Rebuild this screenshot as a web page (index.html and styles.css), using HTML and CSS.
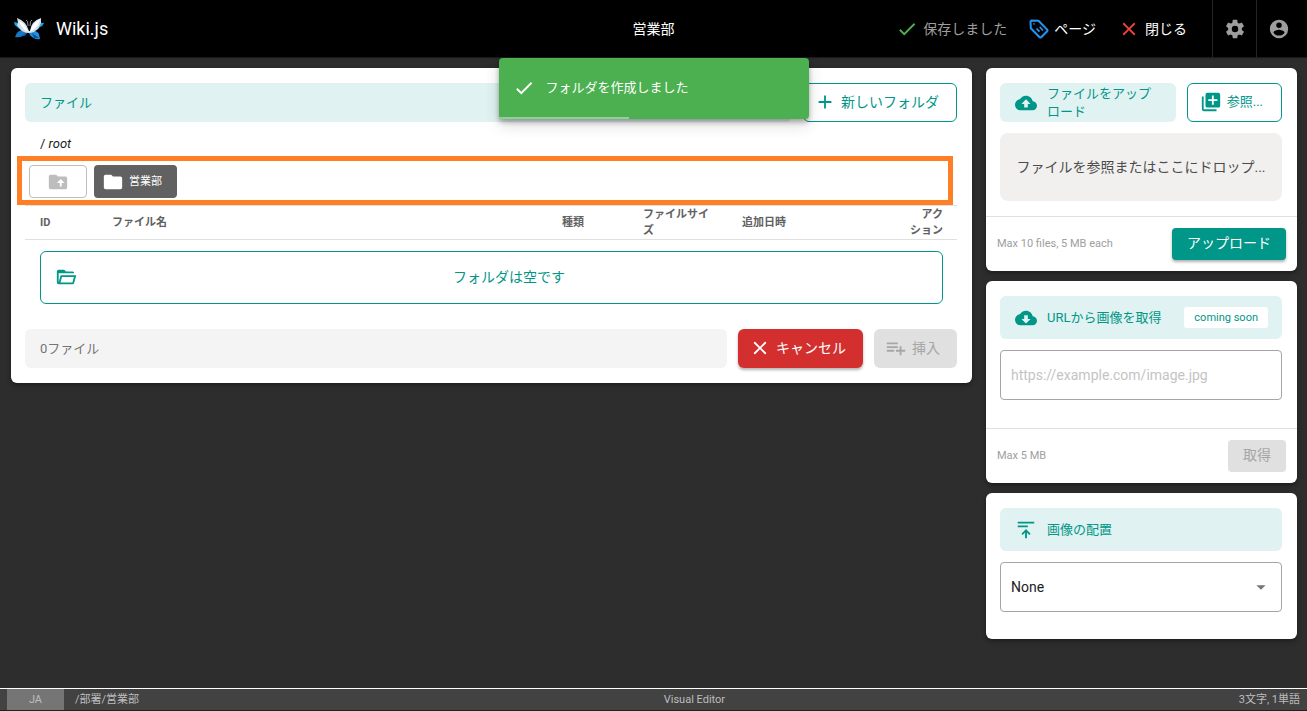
FILE: index.html
```
<!DOCTYPE html>
<html lang="ja">
<head>
<meta charset="utf-8">
<title>営業部 | Wiki.js</title>
<link rel="stylesheet" href="styles.css">
</head>
<body>
<svg class="sprite" aria-hidden="true">
  <symbol id="check" viewBox="0 0 24 24"><path d="M21,7L9,19L3.5,13.5L4.91,12.09L9,16.17L19.59,5.59L21,7Z"/></symbol>
  <symbol id="plus" viewBox="0 0 24 24"><path d="M19,13H13V19H11V13H5V11H11V5H13V11H19V13Z"/></symbol>
  <symbol id="close" viewBox="0 0 24 24"><path d="M19,6.41L17.59,5L12,10.59L6.41,5L5,6.41L10.59,12L5,17.59L6.41,19L12,13.41L17.59,19L19,17.59L13.41,12L19,6.41Z"/></symbol>
  <symbol id="cog" viewBox="0 0 24 24"><path d="M12,15.5A3.5,3.5 0 0,1 8.5,12A3.5,3.5 0 0,1 12,8.5A3.5,3.5 0 0,1 15.5,12A3.5,3.5 0 0,1 12,15.5M19.43,12.97C19.47,12.65 19.5,12.33 19.5,12C19.5,11.67 19.47,11.34 19.43,11L21.54,9.37C21.73,9.22 21.78,8.95 21.66,8.73L19.66,5.27C19.54,5.05 19.27,4.96 19.05,5.05L16.56,6.05C16.04,5.66 15.5,5.32 14.87,5.07L14.5,2.42C14.46,2.18 14.25,2 14,2H10C9.75,2 9.54,2.18 9.5,2.42L9.13,5.07C8.5,5.32 7.96,5.66 7.44,6.05L4.95,5.05C4.73,4.96 4.46,5.05 4.34,5.27L2.34,8.73C2.21,8.95 2.27,9.22 2.46,9.37L4.57,11C4.53,11.34 4.5,11.67 4.5,12C4.5,12.33 4.53,12.65 4.57,12.97L2.46,14.63C2.27,14.78 2.21,15.05 2.34,15.27L4.34,18.73C4.46,18.95 4.73,19.03 4.95,18.95L7.44,17.94C7.96,18.34 8.5,18.68 9.13,18.93L9.5,21.58C9.54,21.82 9.75,22 10,22H14C14.25,22 14.46,21.82 14.5,21.58L14.87,18.93C15.5,18.67 16.04,18.34 16.56,17.94L19.05,18.95C19.27,19.03 19.54,18.95 19.66,18.73L21.66,15.27C21.78,15.05 21.73,14.78 21.54,14.63L19.43,12.97Z"/></symbol>
  <symbol id="account" viewBox="0 0 24 24"><path d="M12,19.2C9.5,19.2 7.29,17.92 6,16C6.03,14 10,12.9 12,12.9C14,12.9 17.97,14 18,16C16.71,17.92 14.5,19.2 12,19.2M12,5A3,3 0 0,1 15,8A3,3 0 0,1 12,11A3,3 0 0,1 9,8A3,3 0 0,1 12,5M12,2A10,10 0 0,0 2,12A10,10 0 0,0 12,22A10,10 0 0,0 22,12C22,6.47 17.5,2 12,2Z"/></symbol>
  <symbol id="folder" viewBox="0 0 24 24"><path d="M10,4H4C2.89,4 2,4.89 2,6V18A2,2 0 0,0 4,20H20A2,2 0 0,0 22,18V8C22,6.89 21.1,6 20,6H12L10,4Z"/></symbol>
  <symbol id="folder-up" viewBox="0 0 24 24"><path d="M20,6A2,2 0 0,1 22,8V18A2,2 0 0,1 20,20H4A2,2 0 0,1 2,18V6A2,2 0 0,1 4,4H10L12,6H20M10.75,13H14V17H16V13H19.25L15,8.75"/></symbol>
  <symbol id="folder-open" viewBox="0 0 24 24"><path d="M6.1,10L4,18V8H21A2,2 0 0,0 19,6H12L10,4H4A2,2 0 0,0 2,6V18A2,2 0 0,0 4,20H19C19.9,20 20.7,19.4 20.9,18.5L23.2,10H6.1M19,18H6L7.6,12H20.6L19,18Z"/></symbol>
  <symbol id="cloud-up" viewBox="0 0 24 24"><path d="M14,13V17H10V13H7L12,8L17,13M19.35,10.03C18.67,6.59 15.64,4 12,4C9.11,4 6.6,5.64 5.35,8.03C2.34,8.36 0,10.9 0,14A6,6 0 0,0 6,20H19A5,5 0 0,0 24,15C24,12.36 21.95,10.22 19.35,10.03Z"/></symbol>
  <symbol id="cloud-down" viewBox="0 0 24 24"><path d="M17,13L12,18L7,13H10V9H14V13M19.35,10.03C18.67,6.59 15.64,4 12,4C9.11,4 6.6,5.64 5.35,8.03C2.34,8.36 0,10.9 0,14A6,6 0 0,0 6,20H19A5,5 0 0,0 24,15C24,12.36 21.95,10.22 19.35,10.03Z"/></symbol>
  <symbol id="add-files" viewBox="0 0 24 24"><path d="M19,11H15V15H13V11H9V9H13V5H15V9H19M20,2H8A2,2 0 0,0 6,4V16A2,2 0 0,0 8,18H20A2,2 0 0,0 22,16V4A2,2 0 0,0 20,2M4,6H2V20A2,2 0 0,0 4,22H18V20H4V6Z"/></symbol>
  <symbol id="playlist-plus" viewBox="0 0 24 24"><path d="M2,16H10V14H2M18,14V10H16V14H12V16H16V20H18V16H22V14M14,6H2V8H14M14,10H2V12H14V10Z"/></symbol>
  <symbol id="align-top" viewBox="0 0 24 24"><path d="M3,3H21V5H3V3M3,7H14V9H3V7M12,11L17,16L15.6,17.4L13,14.8V21H11V14.8L8.4,17.4L7,16L12,11Z"/></symbol>
  <symbol id="menu-down" viewBox="0 0 24 24"><path d="M7,10L12,15L17,10H7Z"/></symbol>
  <symbol id="tag" viewBox="0 0 20 20"><g fill="none" stroke="currentColor" stroke-width="2" stroke-linejoin="round"><path d="M1.5 2.5L2.5 1.5L9.5 1.7L18.2 10.6Q18.8 11.4 18.2 12.2L12.2 18.2Q11.4 18.8 10.6 18.2L1.8 9.3Z"/><path d="M4.4 4.8H5.6M7.5 9.5L10.5 12.7M10.7 8L14 11.5" stroke-width="1.8"/></g></symbol>
</svg>

<header class="topbar">
  <a class="brand" href="#">
    <svg class="logo" viewBox="0 0 30 24" aria-hidden="true">
      <path fill="#19a5ea" d="M14 15Q6 13 3 10Q0 8 0 5Q4 5 8 8ZM16 15Q23 13 26 10Q29 9 30 6Q26 5 22 8Z"/>
      <path fill="#1379c4" d="M14 14C8 12 3 14 2 18L1 20Q5 21 9 19Q13 18 14 14Z"/>
      <path fill="#1c8fdd" d="M15 14Q22 12 25 17L26 22Q22 23 18 20Q15 18 15 14Z"/>
      <path fill="#07569b" d="M8 19L14 14L11 19ZM18 16L25 21L20 21Z"/>
      <path fill="#d5dfea" d="M14 16Q8 15 6 12L3 8L4 6L3 1Q12 4 15 14L16 14Q17 4 27 1L27 6L26 8L24 12Q21 15 16 16Z"/>
      <path fill="#fff" d="M14 15Q8 12 5 4Q12 7 14 15ZM16 15Q18 6 26 2Q25 10 16 15Z"/>
      <path fill="none" stroke="#8a929c" stroke-width="1" d="M12 3Q14 3 14 9M18 3Q16 3 16 9"/>
    </svg>
    <span>Wiki.js</span>
  </a>
  <h1 class="page-title">営業部</h1>
  <nav class="actions">
    <button class="action saved" type="button"><svg class="icon i22 green"><use href="#check"/></svg>保存しました</button>
    <button class="action" type="button"><svg class="icon i20 blue"><use href="#tag"/></svg>ページ</button>
    <button class="action" type="button"><svg class="icon i22 red"><use href="#close"/></svg>閉じる</button>
    <button class="square" type="button" aria-label="設定"><svg class="icon i22"><use href="#cog"/></svg></button>
    <button class="square" type="button" aria-label="アカウント"><svg class="icon i22"><use href="#account"/></svg></button>
  </nav>
</header>

<div class="toast" role="status">
  <svg class="icon i22"><use href="#check"/></svg><span>フォルダを作成しました</span>
  <div class="toast-progress"></div>
</div>

<main class="workspace">
  <section class="card browser">
    <div class="row">
      <h2 class="bar grow">ファイル</h2>
      <button class="btn outline tall new-folder" type="button"><svg class="icon i22"><use href="#plus"/></svg>新しいフォルダ</button>
    </div>
    <div class="crumb">/ <em>root</em></div>
    <div class="folders">
      <button class="btn up" type="button" aria-label="上の階層へ" disabled><svg class="icon i22"><use href="#folder-up"/></svg></button>
      <button class="btn dark" type="button"><svg class="icon i22"><use href="#folder"/></svg>営業部</button>
    </div>
    <table class="files">
      <thead>
        <tr><th class="c-id">ID</th><th>ファイル名</th><th class="c-type">種類</th><th class="c-size">ファイルサイ<br>ズ</th><th class="c-date">追加日時</th><th class="c-act">アク<br>ション</th></tr>
      </thead>
      <tbody>
        <tr><td colspan="6"><div class="empty"><svg class="icon i22"><use href="#folder-open"/></svg><span>フォルダは空です</span></div></td></tr>
      </tbody>
    </table>
    <div class="row foot">
      <div class="bar grey grow">0ファイル</div>
      <button class="btn danger tall" type="button"><svg class="icon i22"><use href="#close"/></svg>キャンセル</button>
      <button class="btn tall insert" type="button" disabled><svg class="icon i22"><use href="#playlist-plus"/></svg>挿入</button>
    </div>
  </section>

  <aside class="side">
    <section class="card">
      <div class="card-body">
        <div class="row">
          <h2 class="bar icon-bar grow"><svg class="icon i22"><use href="#cloud-up"/></svg><span>ファイルをアップロード</span></h2>
          <button class="btn outline tall browse" type="button"><svg class="icon i22"><use href="#add-files"/></svg>参照...</button>
        </div>
        <div class="dropzone"><span>ファイルを参照またはここにドロップ...</span></div>
      </div>
      <div class="card-foot"><span>Max 10 files, 5 MB each</span><button class="btn teal" type="button">アップロード</button></div>
    </section>

    <section class="card">
      <div class="card-body">
        <h2 class="bar icon-bar high"><svg class="icon i22"><use href="#cloud-down"/></svg><label class="grow" for="url">URLから画像を取得</label><span class="chip">coming soon</span></h2>
        <input class="field" id="url" type="text" placeholder="https://example.com/image.jpg">
      </div>
      <div class="card-foot spaced"><span>Max 5 MB</span><button class="btn fetch" type="button" disabled>取得</button></div>
    </section>

    <section class="card">
      <div class="card-body last">
        <h2 class="bar icon-bar high"><svg class="icon i22"><use href="#align-top"/></svg><label for="align">画像の配置</label></h2>
        <div class="select-wrap">
          <select class="field" id="align"><option>None</option></select>
          <svg class="icon i22 caret"><use href="#menu-down"/></svg>
        </div>
      </div>
    </section>
  </aside>
</main>

<footer class="status">
  <div class="path"><span class="lang">JA</span><span>/部署/営業部</span></div>
  <div>Visual Editor</div>
  <div>3文字, 1単語</div>
</footer>
</body>
</html>
```
FILE: styles.css
```
* { box-sizing: border-box; }

body {
  margin: 0;
  min-height: 100vh;
  display: flex;
  flex-direction: column;
  position: relative;
  background: #2d2d2d;
  color: #212121;
  font-family: Roboto, "Noto Sans CJK JP", sans-serif;
  font-size: 14px;
  line-height: 20px;
}

h1, h2 { margin: 0; font-weight: 400; }
button, input, select { font: inherit; color: inherit; }
button { border: 0; background: none; padding: 0; white-space: nowrap; }

.sprite { display: none; }
.icon { flex: none; fill: currentColor; }
.i22 { width: 22px; height: 22px; }
.i20 { width: 20px; height: 20px; }
.green { color: #4caf50; }
.blue { color: #2196f3; }
.red { color: #f44336; }
.grow { flex: 1; min-width: 0; }

/* Top bar */
.topbar {
  display: grid;
  grid-template-columns: 1fr auto 1fr;
  align-items: center;
  height: 57px;
  padding: 0 7px;
  background: #000;
  color: #fff;
  box-shadow: 0 1px 1px #1c1c1c;
}
.brand { display: flex; align-items: center; gap: 12px; padding-left: 7px; color: #fff; font-size: 18px; text-decoration: none; }
.logo { width: 30px; height: 24px; }
.page-title { font-size: 14px; }
.actions { display: flex; justify-content: flex-end; align-items: center; align-self: stretch; }
.action { display: flex; align-items: center; gap: 5px; margin-right: 22px; }
.action:nth-child(3) { margin-right: 25px; }
.saved { color: #9e9e9e; }
.square {
  display: flex;
  align-items: center;
  justify-content: center;
  align-self: stretch;
  width: 44px;
  border-left: 1px solid #252525;
  color: #9e9e9e;
}

/* Notification */
.toast {
  position: absolute;
  top: 58px;
  left: 50%;
  width: 310px;
  height: 61px;
  padding: 0 14px 2px;
  display: flex;
  align-items: center;
  gap: 11px;
  transform: translateX(-50%);
  border-radius: 4px;
  overflow: hidden;
  background: #4caf50;
  color: #fff;
  font-size: 13px;
  box-shadow: 0 3px 5px rgba(0,0,0,.3), 0 6px 16px rgba(0,0,0,.14);
  z-index: 2;
}
.toast-progress { position: absolute; left: 0; bottom: 0; width: 42%; height: 2px; background: rgba(255,255,255,.4); }

/* Layout */
.workspace {
  flex: 1;
  display: grid;
  grid-template-columns: minmax(0, 1fr) 311px;
  align-items: start;
  gap: 14px;
  padding: 11px 10px 11px 11px;
}
.side { display: grid; gap: 10px; }
.card { border-radius: 6px; background: #fff; box-shadow: 0 2px 5px rgba(0,0,0,.4); }
.browser { padding: 15px 15px 15px 14px; }
.row { display: flex; gap: 11px; }

.bar {
  display: flex;
  align-items: center;
  min-height: 39px;
  padding: 0 15px;
  border-radius: 6px;
  background: #e0f2f1;
  color: #009688;
  font-size: 13px;
  line-height: 18px;
}
.grey { background: #f4f4f4; color: #757575; }
.high { min-height: 43px; }
.icon-bar { gap: 10px; padding: 0 14px 0 15px; }

/* Buttons */
.btn {
  display: flex;
  align-items: center;
  justify-content: center;
  gap: 5px;
  height: 32px;
  padding: 0 15px 2px;
  border-radius: 4px;
}
.tall { height: 39px; border-radius: 6px; }
.outline { border: 1px solid #009688; color: #009688; background: #fff; }
.new-folder { padding: 0 17px 2px 10px; }
.browse { padding: 0 18px 2px 12px; font-size: 13px; }
.danger { padding: 0 17px 2px 11px; background: #d32f2f; color: #fff; box-shadow: 0 2px 3px rgba(0,0,0,.3); }
.insert { padding: 0 17px 2px 11px; }
.insert, .fetch { background: #e0e0e0; color: #a6a6a6; }
.teal { background: #009688; color: #fff; box-shadow: 0 2px 3px rgba(0,0,0,.3); }
.up { width: 58px; padding: 0; border: 1px solid #bdbdbd; color: #bdbdbd; }
.dark { padding: 0 15px 0 8px; background: #616161; color: #fff; font-size: 11px; }

/* File browser */
.crumb { padding: 11px 15px; font-size: 13px; line-height: 21px; }
.folders {
  position: relative;
  display: flex;
  gap: 7px;
  padding-left: 4px;
  margin-bottom: 7px;
}
.folders .btn { height: 33px; }
.folders::after {
  content: "";
  position: absolute;
  inset: -9px 4px -7px -8px;
  border: 5px solid #ff7f27;
  pointer-events: none;
}
.files { width: 100%; border-collapse: collapse; table-layout: fixed; }
.files th {
  height: 34px;
  padding: 0 14px 0 15px;
  border-top: 1px solid #e0e0e0;
  border-bottom: 1px solid #e0e0e0;
  color: #616161;
  font-size: 11px;
  font-weight: 700;
  line-height: 16px;
  text-align: left;
  white-space: nowrap;
}
.files td { padding: 11px 14px 0 15px; }
.files .c-id { width: 72px; }
.c-type { width: 81px; }
.c-size { width: 99px; }
.c-date { width: 144px; }
.files .c-act { width: 86px; text-align: right; }
.empty {
  display: grid;
  grid-template-columns: 22px 1fr;
  align-items: center;
  gap: 14px;
  height: 53px;
  padding: 0 15px 2px 14px;
  border: 1px solid #009688;
  border-radius: 6px;
  color: #009688;
  text-align: center;
}
.foot { margin-top: 25px; }

/* Side cards */
.card-body { padding: 15px 15px 15px 14px; }
.dropzone {
  display: flex;
  align-items: center;
  justify-content: center;
  min-height: 68px;
  margin-top: 11px;
  border-radius: 8px;
  background: #f1f0ef;
  color: #4c4c4c;
  white-space: nowrap;
}
.card-foot {
  display: flex;
  align-items: center;
  justify-content: space-between;
  padding: 11px;
  border-top: 1px solid #e0e0e0;
  color: #9e9e9e;
  font-size: 11px;
}
.card-foot .btn { font-size: 14px; }
.spaced { margin-top: 13px; }
.last { padding-bottom: 27px; }
.chip { padding: 0 10px; border-radius: 3px; background: #fff; font-size: 11px; line-height: 21px; }
.field {
  display: block;
  width: 100%;
  height: 50px;
  margin-top: 11px;
  padding: 0 10px;
  border: 1px solid #a5a5a5;
  border-radius: 4px;
  background: #fff;
  appearance: none;
}
.field::placeholder { color: #c4c4c4; }
.select-wrap { position: relative; }
.caret { position: absolute; right: 10px; top: 14px; color: #757575; }

/* Status bar */
.status {
  display: flex;
  justify-content: space-between;
  align-items: center;
  height: 23px;
  padding: 0 7px;
  border-top: 1px solid #fff;
  border-bottom: 1px solid #212121;
  background: #424242;
  color: #bdbdbd;
  font-size: 11px;
  line-height: 21px;
}
.path { display: flex; gap: 11px; padding-right: 11px; }
.lang { width: 57px; background: #757575; text-align: center; }
```
